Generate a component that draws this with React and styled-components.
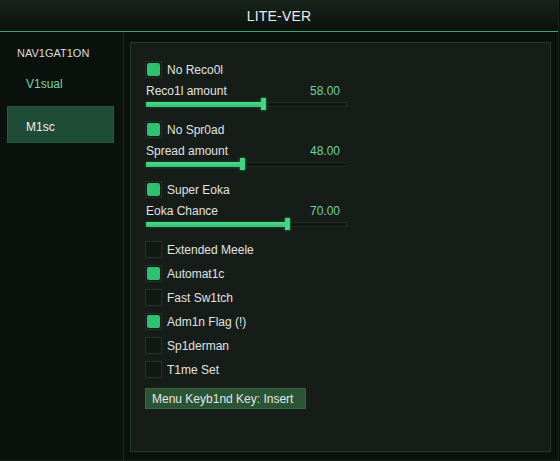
import React, { useState } from 'react';
import styled, { createGlobalStyle, css } from 'styled-components';

const GlobalStyle = createGlobalStyle`
  html, body {
    margin: 0;
    padding: 0;
    background: #0a0f0c;
    font-family: "Liberation Sans", Arial, sans-serif;
  }
`;

const Window = styled.div`
  width: 558px;
  height: 460px;
  display: flex;
  flex-direction: column;
  background: #0b110d;
  border-right: 1px solid #17241b;
  border-bottom: 1px solid #17241b;
`;

const Header = styled.header`
  height: 31px;
  flex: none;
  display: flex;
  align-items: center;
  justify-content: center;
  background: linear-gradient(#17231c, #0b110d);
  border-bottom: 1px solid #3aa673;
  color: #ececec;
  font-size: 14px;
  letter-spacing: 0.2px;
`;

const Body = styled.div`
  flex: 1;
  display: flex;
  min-height: 0;
`;

const Sidebar = styled.nav`
  width: 124px;
  flex: none;
  box-sizing: border-box;
  padding: 14px 9px 0 7px;
  border-right: 1px solid #17291d;
  display: flex;
  flex-direction: column;
  gap: 6px;
`;

const NavTitle = styled.div`
  padding-left: 10px;
  font-size: 11px;
  line-height: 14px;
  color: #dcdcdc;
  margin-bottom: -3px;
`;

const NavTab = styled.div`
  height: 37px;
  box-sizing: border-box;
  padding: 5px 0 0 18px;
  display: flex;
  align-items: center;
  font-size: 12px;
  color: #7fd39d;
  border: 1px solid transparent;
  ${p => p.active && css`
    color: #f0f0f0;
    background: #1f4c36;
    border-color: #28583f;
  `}
`;

const Content = styled.main`
  flex: 1;
  display: flex;
  padding: 10px 7px 8px 6px;
`;

const Panel = styled.section`
  flex: 1;
  background: #161d18;
  border: 1px solid #1f3a29;
  padding: 18px 14px 0 14px;
  display: flex;
  flex-direction: column;
  align-items: flex-start;
`;

const CheckRow = styled.label`
  display: flex;
  align-items: center;
  gap: 5px;
  height: 17px;
  margin-top: ${p => p.$mt || 0}px;
  font-size: 12px;
  color: #e2e2e2;
  cursor: pointer;
`;

const Box = styled.span`
  width: 17px;
  height: 17px;
  box-sizing: border-box;
  border: 1px solid #243328;
  background: #111813;
  padding: 1px;
  display: flex;
  &::after {
    content: '';
    flex: 1;
    border-radius: 2px;
    background: ${p => (p.checked ? '#31c072' : 'transparent')};
  }
`;

const SliderBlock = styled.div`
  width: 201px;
  margin: 7px 0 0 1px;
`;

const SliderLabel = styled.div`
  display: flex;
  justify-content: space-between;
  padding-right: 7px;
  font-size: 12px;
  line-height: 13px;
  color: #e2e2e2;
`;

const Value = styled.span`
  color: #72cf9f;
`;

const TrackWrap = styled.div`
  position: relative;
  height: 12px;
  display: flex;
  align-items: center;
`;

const Track = styled.div`
  flex: 1;
  height: 5px;
  box-sizing: border-box;
  background: #0f1511;
  border: 1px solid #1d2b21;
  position: relative;
`;

const Fill = styled.div`
  position: absolute;
  left: -1px;
  top: -1px;
  bottom: -1px;
  background: linear-gradient(#4bdc89, #33c272);
  box-shadow: 0 0 3px rgba(60, 210, 120, 0.35);
`;

const Thumb = styled.div`
  position: absolute;
  top: 0;
  width: 5px;
  height: 12px;
  margin-left: -2px;
  background: #42d482;
  box-shadow: 0 0 3px rgba(60, 220, 120, 0.6);
`;

const KeyButton = styled.button`
  margin-top: 10px;
  height: 21px;
  width: 161px;
  padding: 0 0 0 6px;
  text-align: left;
  font-family: inherit;
  font-size: 12px;
  color: #e4e4e4;
  background: #2a5434;
  border: 1px solid #356541;
  cursor: pointer;
`;

function Checkbox({ label, checked, onToggle, mt }) {
  return (
    <CheckRow $mt={mt} onClick={onToggle}>
      <Box checked={checked} />
      {label}
    </CheckRow>
  );
}

function Slider({ label, value }) {
  return (
    <SliderBlock>
      <SliderLabel>
        <span>{label}</span>
        <Value>{value.toFixed(2)}</Value>
      </SliderLabel>
      <TrackWrap>
        <Track>
          <Fill style={{ width: `${value}%` }} />
        </Track>
        <Thumb style={{ left: `${value}%` }} />
      </TrackWrap>
    </SliderBlock>
  );
}

const groups = [
  { key: 'recoil', label: 'No Reco0l', slider: 'Reco1l amount', value: 58 },
  { key: 'spread', label: 'No Spr0ad', slider: 'Spread amount', value: 48 },
  { key: 'eoka', label: 'Super Eoka', slider: 'Eoka Chance', value: 70 },
];

const toggles = [
  { key: 'meele', label: 'Extended Meele' },
  { key: 'auto', label: 'Automat1c' },
  { key: 'switch', label: 'Fast Sw1tch' },
  { key: 'admin', label: 'Adm1n Flag (!)' },
  { key: 'spider', label: 'Sp1derman' },
  { key: 'time', label: 'T1me Set' },
];

export default function App() {
  const [state, setState] = useState({
    recoil: true,
    spread: true,
    eoka: true,
    meele: false,
    auto: true,
    switch: false,
    admin: true,
    spider: false,
    time: false,
  });
  const flip = k => setState(s => ({ ...s, [k]: !s[k] }));

  return (
    <>
      <GlobalStyle />
      <Window>
        <Header>LITE-VER</Header>
        <Body>
          <Sidebar>
            <NavTitle>NAV1GAT1ON</NavTitle>
            <NavTab>V1sual</NavTab>
            <NavTab active>M1sc</NavTab>
          </Sidebar>
          <Content>
            <Panel>
              {groups.map((g, i) => (
                <React.Fragment key={g.key}>
                  <Checkbox
                    label={g.label}
                    checked={state[g.key]}
                    onToggle={() => flip(g.key)}
                    mt={i === 0 ? 0 : 11}
                  />
                  <Slider label={g.slider} value={g.value} />
                </React.Fragment>
              ))}
              {toggles.map((t, i) => (
                <Checkbox
                  key={t.key}
                  label={t.label}
                  checked={state[t.key]}
                  onToggle={() => flip(t.key)}
                  mt={i === 0 ? 11 : 7}
                />
              ))}
              <KeyButton>Menu Keyb1nd Key: Insert</KeyButton>
            </Panel>
          </Content>
        </Body>
      </Window>
    </>
  );
}
